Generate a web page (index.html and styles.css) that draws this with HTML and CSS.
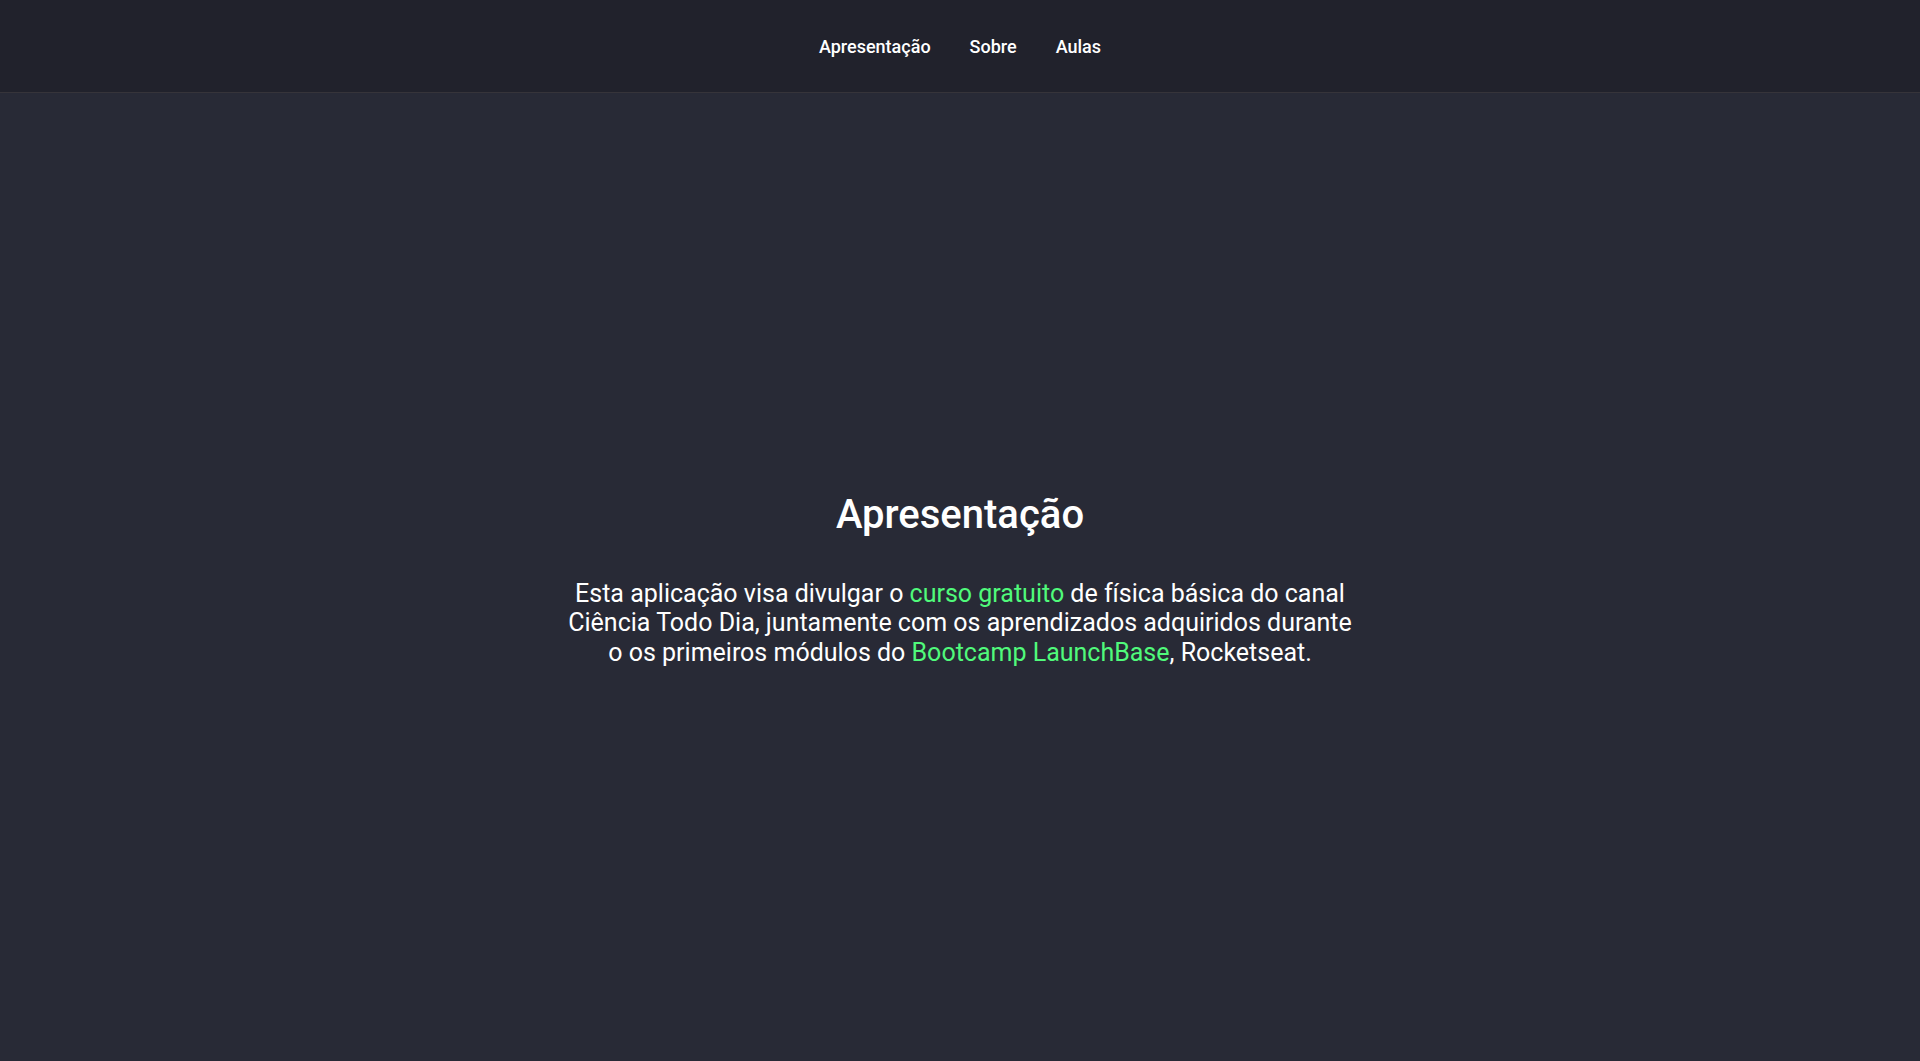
FILE: index.html
```html
<!DOCTYPE html>
<html lang="pt-BR">
<head>
<meta charset="utf-8">
<title>Apresentação</title>
<link rel="stylesheet" href="styles.css">
</head>
<body>
<header class="header">
  <nav class="nav">
    <a href="#" class="nav-link">Apresentação</a>
    <a href="#" class="nav-link">Sobre</a>
    <a href="#" class="nav-link">Aulas</a>
  </nav>
</header>
<main class="main">
  <section class="intro">
    <h1 class="title">Apresentação</h1>
    <p class="text">Esta aplicação visa divulgar o <span class="hl">curso gratuito</span> de física básica do canal Ciência Todo Dia, juntamente com os aprendizados adquiridos durante o os primeiros módulos do <span class="hl">Bootcamp LaunchBase</span>, Rocketseat.</p>
  </section>
</main>
</body>
</html>
```
FILE: styles.css
```css
* { box-sizing: border-box; margin: 0; padding: 0; }
html, body { height: 100%; }
body {
  background: #282a36;
  color: #ffffff;
  font-family: Roboto, "Noto Sans", sans-serif;
  display: flex;
  flex-direction: column;
  min-height: 100vh;
}
.header {
  background: #21222c;
  height: 93px;
  border-bottom: 1px solid #36343a;
  display: flex;
  justify-content: center;
  align-items: center;
}
.nav {
  display: flex;
  gap: 39px;
}
.nav-link {
  color: #ffffff;
  text-decoration: none;
  font-size: 18px;
  font-weight: 500;
}
.main {
  flex: 1;
  display: flex;
  justify-content: center;
  align-items: center;
  padding-top: 4px;
}
.intro {
  width: 800px;
  text-align: center;
}
.title {
  font-size: 40px;
  font-weight: 500;
  line-height: 1.2;
  margin-bottom: 40px;
}
.text {
  font-size: 25px;
  line-height: 29.5px;
}
.hl { color: #50fa7b; }
```
